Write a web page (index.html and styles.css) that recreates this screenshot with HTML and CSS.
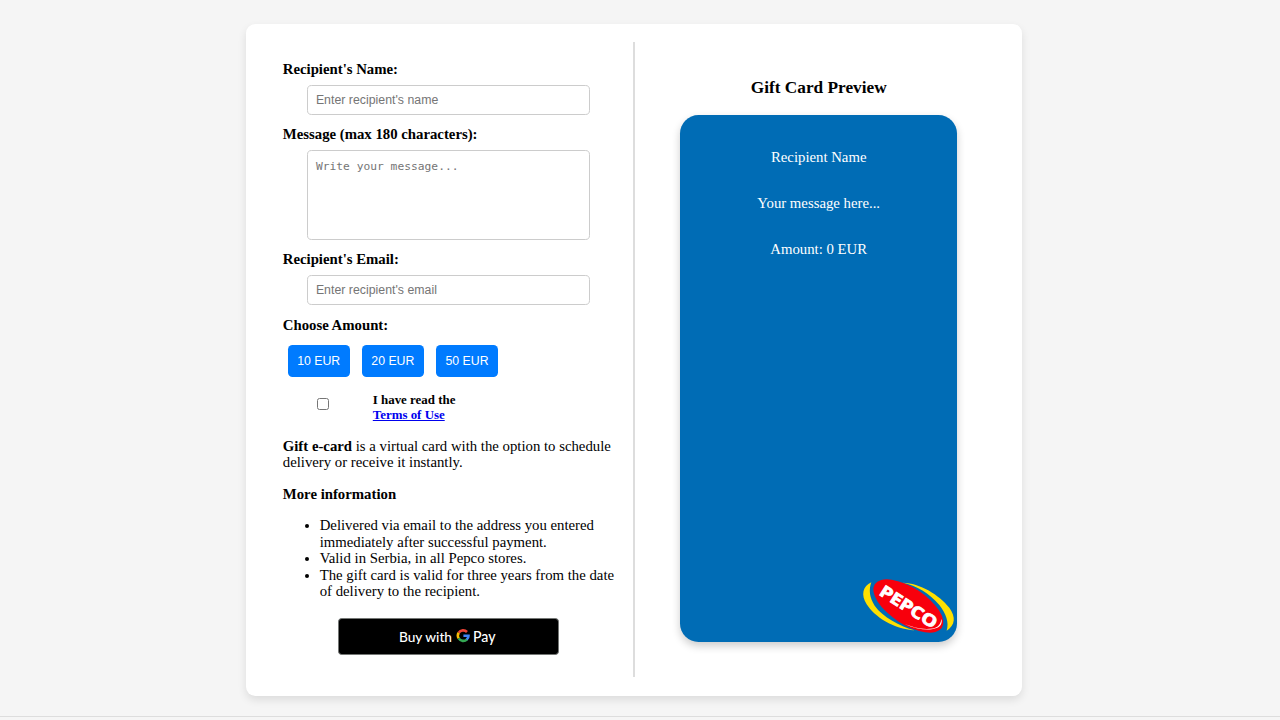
FILE: index.html
```html
<!DOCTYPE html>
<html lang="en">
<head>
<meta charset="utf-8">
<title>Gift Card</title>
<link rel="stylesheet" href="styles.css">
</head>
<body>
<main class="panel">
  <section class="form">
    <label class="label" for="name">Recipient's Name:</label>
    <input class="field" id="name" type="text" placeholder="Enter recipient's name">
    <label class="label" for="message">Message (max 180 characters):</label>
    <textarea class="field area" id="message" maxlength="180" placeholder="Write your message..."></textarea>
    <label class="label" for="email">Recipient's Email:</label>
    <input class="field email" id="email" type="email" placeholder="Enter recipient's email">
    <span class="label">Choose Amount:</span>
    <div class="amounts">
      <button class="amount" type="button">10 EUR</button>
      <button class="amount" type="button">20 EUR</button>
      <button class="amount" type="button">50 EUR</button>
    </div>
    <div class="terms">
      <input class="check" id="terms" type="checkbox">
      <label class="terms-label" for="terms">I have read the<br><a href="#">Terms of Use</a></label>
    </div>
    <p class="text intro"><b>Gift e-card</b> is a virtual card with the option to schedule delivery or receive it instantly.</p>
    <p class="text"><b>More information</b></p>
    <ul class="list">
      <li>Delivered via email to the address you entered immediately after successful payment.</li>
      <li>Valid in Serbia, in all Pepco stores.</li>
      <li>The gift card is valid for three years from the date of delivery to the recipient.</li>
    </ul>
    <button class="pay" type="button" aria-label="Buy with GPay">
      <svg width="100" height="24" viewBox="0 0 100 24">
        <text class="pay-text" x="1" y="18" textLength="53" lengthAdjust="spacingAndGlyphs">Buy with</text>
        <g fill="none" stroke-width="2.6" transform="translate(0 .6)">
          <path stroke="#ea4335" d="M60.7 8.2A5.3 5.3 0 0 1 69 7.4"/>
          <path stroke="#fbbc04" d="M60.7 13.8A5.3 5.3 0 0 1 60.7 8.2"/>
          <path stroke="#34a853" d="M69 14.7A5.3 5.3 0 0 1 60.7 13.8"/>
          <path stroke="#4285f4" d="M65.4 11.1H70.5Q70.5 13.4 68.7 15"/>
        </g>
        <text class="pay-text brand" x="75" y="17.5" textLength="22.5" lengthAdjust="spacingAndGlyphs">Pay</text>
      </svg>
    </button>
  </section>
  <section class="preview">
    <h3 class="title">Gift Card Preview</h3>
    <div class="card">
      <p class="line">Recipient Name</p>
      <p class="line">Your message here...</p>
      <p class="line">Amount: 0 EUR</p>
      <svg class="logo" width="93" height="54" viewBox="66 56 279 162">
        <path fill="#ffe000" d="M94 66C68 78 62 104 80 132C104 170 160 206 224 210C180 198 128 170 104 136C88 112 86 88 94 66Z"/>
        <path fill="#ffe000" d="M188 67C240 68 298 104 328 142C348 170 346 194 320 211C328 186 318 160 298 134C268 98 230 76 188 67Z"/>
        <ellipse cx="205" cy="137" rx="120" ry="55" fill="#f8000c" transform="rotate(33 205 137)"/>
        <path fill="#fff" d="M194 191C242 213 290 212 302 194C306 187 306 180 304 176C302 197 288 206 260 206C236 205 214 199 194 191Z"/>
        <text class="logo-text" transform="translate(115 102) rotate(32.5)" textLength="194" lengthAdjust="spacingAndGlyphs">PEPCO</text>
      </svg>
    </div>
  </section>
</main>
<footer class="footer"></footer>
</body>
</html>
```

FILE: styles.css
```css
* { box-sizing: border-box; }
body {
  margin: 0;
  height: 720px;
  overflow: hidden;
  background: #f5f5f5;
  color: #000;
  font: 14.77px/16.6px "Liberation Serif", "Times New Roman", serif;
  padding-top: 24px;
}
.panel {
  display: flex;
  width: 776px;
  height: 672px;
  margin-left: 246px;
  padding: 18.4px;
  background: #fff;
  border-radius: 9.2px;
  box-shadow: 0 4px 9px rgba(0, 0, 0, .1);
}
.form {
  width: 370.6px;
  height: 635px;
  padding: 18.4px;
  border-right: 2px solid #ddd;
}
.label { display: block; height: 17px; margin-bottom: 7.2px; font-weight: bold; }
.field {
  display: block;
  width: 283px;
  height: 30px;
  margin: 0 auto 11px;
  padding: 1px 7.7px 0;
  border: 1px solid #ccc;
  border-radius: 4.6px;
  background: #fff;
  font: 12.3px "Liberation Sans", Arial, sans-serif;
  letter-spacing: .02px;
  outline: 0;
}
.field::placeholder { color: #757575; opacity: 1; }
.area {
  height: 90px;
  margin-bottom: 10.7px;
  padding-top: 8px;
  resize: none;
  font: 11.25px/15px "DejaVu Sans Mono", monospace;
}
.email { padding-top: 0; margin-bottom: 11.6px; }
.amounts { display: flex; gap: 12.4px; padding: 3.8px 0 0 5px; }
.amount {
  width: 61.8px;
  height: 32.5px;
  padding: 0;
  border: 0;
  border-radius: 4.6px;
  background: #007bff;
  color: #fff;
  font: 12.3px "Liberation Sans", Arial, sans-serif;
}
.terms { display: flex; align-items: center; margin-top: 14.6px; height: 30px; }
.check { width: 12px; height: 12px; margin: 0 43.5px 6px 34.5px; }
.terms-label { font-size: 12.92px; line-height: 15px; font-weight: bold; }
.terms-label a { color: #0000ee; }
.text { margin: 14.8px 0 0; }
.intro { margin-top: 15.9px; }
.list { margin: 14.9px 0 0; padding-left: 36.9px; }
.pay {
  display: flex;
  align-items: center;
  justify-content: center;
  width: 221px;
  height: 37px;
  margin: 17.8px auto 0 55px;
  padding: 0;
  background: #000;
  border: 1px solid #747775;
  border-radius: 3.7px;
}
.pay-text { fill: #fff; font: 500 14px Lato, sans-serif; }
.brand { font-size: 15.5px; }
.preview { flex: 1; padding: 36px 1.2px 0 0; text-align: center; }
.title { margin: 0 0 17px; font-size: 17.3px; line-height: 20px; }
.card {
  position: relative;
  width: 277px;
  height: 526.5px;
  margin: 0 auto;
  padding-top: 33.8px;
  border-radius: 18.5px;
  background: #006cb5;
  color: #fff;
  box-shadow: 0 4px 9px rgba(0, 0, 0, .2);
}
.line { margin: 0 0 29.4px; }
.logo { position: absolute; right: 2px; bottom: 9px; overflow: visible; }
.logo-text { fill: #fff; stroke: #fff; stroke-width: 2.5px; font: bold 49px "Open Sans", sans-serif; }
.footer { margin-top: 20px; border-top: 1px solid #ddd; height: 4px; }
```
